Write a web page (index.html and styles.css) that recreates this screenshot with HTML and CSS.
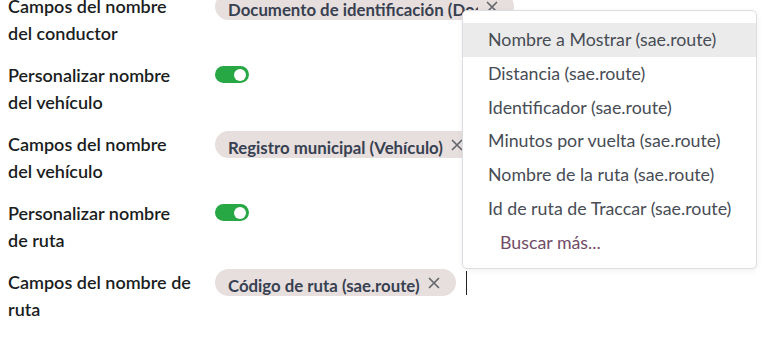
FILE: index.html
```html
<!DOCTYPE html>
<html lang="es">
<head>
<meta charset="utf-8">
<link rel="stylesheet" href="styles.css">
</head>
<body>
<div class="form">
  <div class="row">
    <div class="label">Campos del nombre del conductor</div>
    <div class="field">
      <span class="tag tag-long"><span class="tag-text">Documento de identificación (Documento)</span><svg class="tag-x" viewBox="0 0 12 12"><path d="M1.5 1.5L10.5 10.5M10.5 1.5L1.5 10.5"/></svg></span>
    </div>
  </div>
  <div class="row">
    <div class="label">Personalizar nombre del vehículo</div>
    <div class="field"><span class="toggle"><span class="knob"></span></span></div>
  </div>
  <div class="row">
    <div class="label">Campos del nombre del vehículo</div>
    <div class="field">
      <span class="tag"><span class="tag-text">Registro municipal (Vehículo)</span><svg class="tag-x" viewBox="0 0 12 12"><path d="M1.5 1.5L10.5 10.5M10.5 1.5L1.5 10.5"/></svg></span>
    </div>
  </div>
  <div class="row">
    <div class="label">Personalizar nombre de ruta</div>
    <div class="field"><span class="toggle"><span class="knob"></span></span></div>
  </div>
  <div class="row">
    <div class="label">Campos del nombre de ruta</div>
    <div class="field">
      <span class="tag"><span class="tag-text">Código de ruta (sae.route)</span><svg class="tag-x" viewBox="0 0 12 12"><path d="M1.5 1.5L10.5 10.5M10.5 1.5L1.5 10.5"/></svg></span>
      <span class="caret"></span>
    </div>
  </div>
</div>
<ul class="dropdown">
  <li class="item active">Nombre a Mostrar (sae.route)</li>
  <li class="item">Distancia (sae.route)</li>
  <li class="item">Identificador (sae.route)</li>
  <li class="item">Minutos por vuelta (sae.route)</li>
  <li class="item">Nombre de la ruta (sae.route)</li>
  <li class="item">Id de ruta de Traccar (sae.route)</li>
  <li class="item more">Buscar más...</li>
</ul>
</body>
</html>
```
FILE: styles.css
```css
html, body {
  margin: 0;
  padding: 0;
  background: #ffffff;
  overflow: hidden;
}
body {
  font-family: Lato, "Noto Sans", sans-serif;
  color: #212529;
  width: 771px;
  height: 345px;
  position: relative;
}
.form {
  display: flex;
  flex-direction: column;
  gap: 16px;
  margin-top: -7px;
  padding-left: 8px;
}
.row {
  display: grid;
  grid-template-columns: 207px 1fr;
  align-items: start;
}
.label {
  font-size: 18px;
  font-weight: 600;
  line-height: 26.5px;
  color: #1a1d21;
  width: 186px;
}
.field {
  display: flex;
  align-items: flex-start;
  gap: 10px;
  min-height: 27px;
}
.tag {
  display: inline-flex;
  align-items: flex-start;
  height: 27px;
  overflow: hidden;
  background: #e7dfde;
  border-radius: 14px;
  padding: 0 16px 0 13px;
  font-size: 16.8px;
  font-weight: 700;
  color: #374151;
  box-sizing: border-box;
}
.tag-text {
  line-height: 33px;
  height: 27px;
  white-space: nowrap;
  overflow: hidden;
}
.tag-long .tag-text {
  max-width: 250px;
}
.tag-x {
  width: 12px;
  height: 12px;
  margin: 8px 0 0 8px;
  flex: none;
  fill: none;
  stroke: #64676c;
  stroke-width: 1.7;
  stroke-linecap: round;
}
.toggle {
  display: inline-block;
  width: 34px;
  height: 17px;
  background: #28a745;
  border-radius: 9px;
  position: relative;
  margin-top: 4px;
}
.knob {
  position: absolute;
  right: 3px;
  top: 2.5px;
  width: 12px;
  height: 12px;
  border-radius: 50%;
  background: #ffffff;
}
.caret {
  display: inline-block;
  width: 1px;
  height: 24px;
  margin-top: 2px;
  background: #222;
}
.dropdown {
  position: absolute;
  left: 462px;
  top: 10px;
  width: 295px;
  height: 259px;
  margin: 0;
  padding: 12px 0 0;
  box-sizing: border-box;
  list-style: none;
  background: #fff;
  border: 1px solid #dcdde2;
  border-radius: 5px;
  box-shadow: 0 2px 6px rgba(0,0,0,0.06);
}
.item {
  height: 33.8px;
  line-height: 33.8px;
  padding-left: 25px;
  font-size: 17.8px;
  color: #474c55;
  white-space: nowrap;
}
.item.active {
  background: #ebebeb;
}
.item.more {
  padding-left: 37px;
  color: #714b67;
}
```
